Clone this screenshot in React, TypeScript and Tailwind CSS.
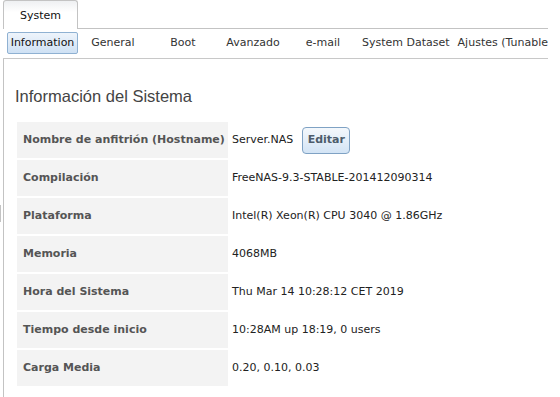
import React from "react";

const rows: [string, string][] = [
  ["Nombre de anfitrión (Hostname)", "Server.NAS"],
  ["Compilación", "FreeNAS-9.3-STABLE-201412090314"],
  ["Plataforma", "Intel(R) Xeon(R) CPU 3040 @ 1.86GHz"],
  ["Memoria", "4068MB"],
  ["Hora del Sistema", "Thu Mar 14 10:28:12 CET 2019"],
  ["Tiempo desde inicio", "10:28AM up 18:19, 0 users"],
  ["Carga Media", "0.20, 0.10, 0.03"],
];

const navItems = ["General", "Boot", "Avanzado", "e-mail", "System Dataset", "Ajustes (Tunables)"];

export default function App() {
  return (
    <div className="relative w-[560px] h-[397px] overflow-hidden bg-white font-['DejaVu_Sans',Verdana,sans-serif] text-[11px] text-[#222]">
      <div className="ml-[3px] w-[545px]">
        {/* top tab row */}
        <div className="flex h-[29px]">
          <div className="w-[75px] h-[29px] border border-b-0 border-[#c3c3c3] rounded-t-[3px] bg-gradient-to-b from-[#eef0f2] to-white to-[40%] flex items-center justify-center pt-[2px] text-[#111]">
            System
          </div>
          <div className="flex-1 border-b border-[#c3c3c3]" />
        </div>
        {/* sub nav */}
        <div className="flex h-[30px] pl-[4px] pt-[3px] border-b border-[#c8c8c8] overflow-hidden whitespace-nowrap">
          <div className="h-[22px] w-[71px] shrink-0 flex items-center justify-center border border-[#8fb1d2] rounded-[2px] bg-gradient-to-b from-[#eef4fb] to-[#cfe1f4] text-[#111]">
            Information
          </div>
          {navItems.map((n) => (
            <div
              key={n}
              className="h-[22px] min-w-[70px] shrink-0 px-[4px] flex items-center justify-center text-[#333]"
            >
              {n}
            </div>
          ))}
        </div>
        {/* content */}
        <div className="h-[340px] border-l border-[#c3c3c3] pl-[11px]">
          <h2 className="pt-[28px] h-[47px] leading-[19px] font-['Liberation_Sans',Arial,sans-serif] text-[16.5px] text-[#444] font-normal">
            Información del Sistema
          </h2>
          <table className="mt-[14px] border-separate border-spacing-[2px]">
            <tbody>
              {rows.map(([k, v], i) => (
                <tr key={k}>
                  <td className="w-[211px] h-[36px] p-0 pl-[6px] bg-[#f3f3f3] font-bold text-[#555] whitespace-nowrap">
                    {k}
                  </td>
                  <td className="h-[36px] p-0 pl-[2px] whitespace-nowrap text-[#222]">
                    {i === 0 ? (
                      <div className="flex items-center">
                        <span>{v}</span>
                        <button className="ml-[9px] w-[48px] h-[27px] border border-[#7fa2c4] rounded-[4px] bg-gradient-to-b from-[#f4f8fc] to-[#d3e4f5] font-bold text-[#4d5c6b] text-[11px] flex items-center justify-center">
                          Editar
                        </button>
                      </div>
                    ) : (
                      v
                    )}
                  </td>
                </tr>
              ))}
            </tbody>
          </table>
        </div>
      </div>
      {/* splitter handle */}
      <div className="absolute left-[0px] top-[205px] w-[1px] h-[17px] bg-[#c3c3c3]" />
    </div>
  );
}
